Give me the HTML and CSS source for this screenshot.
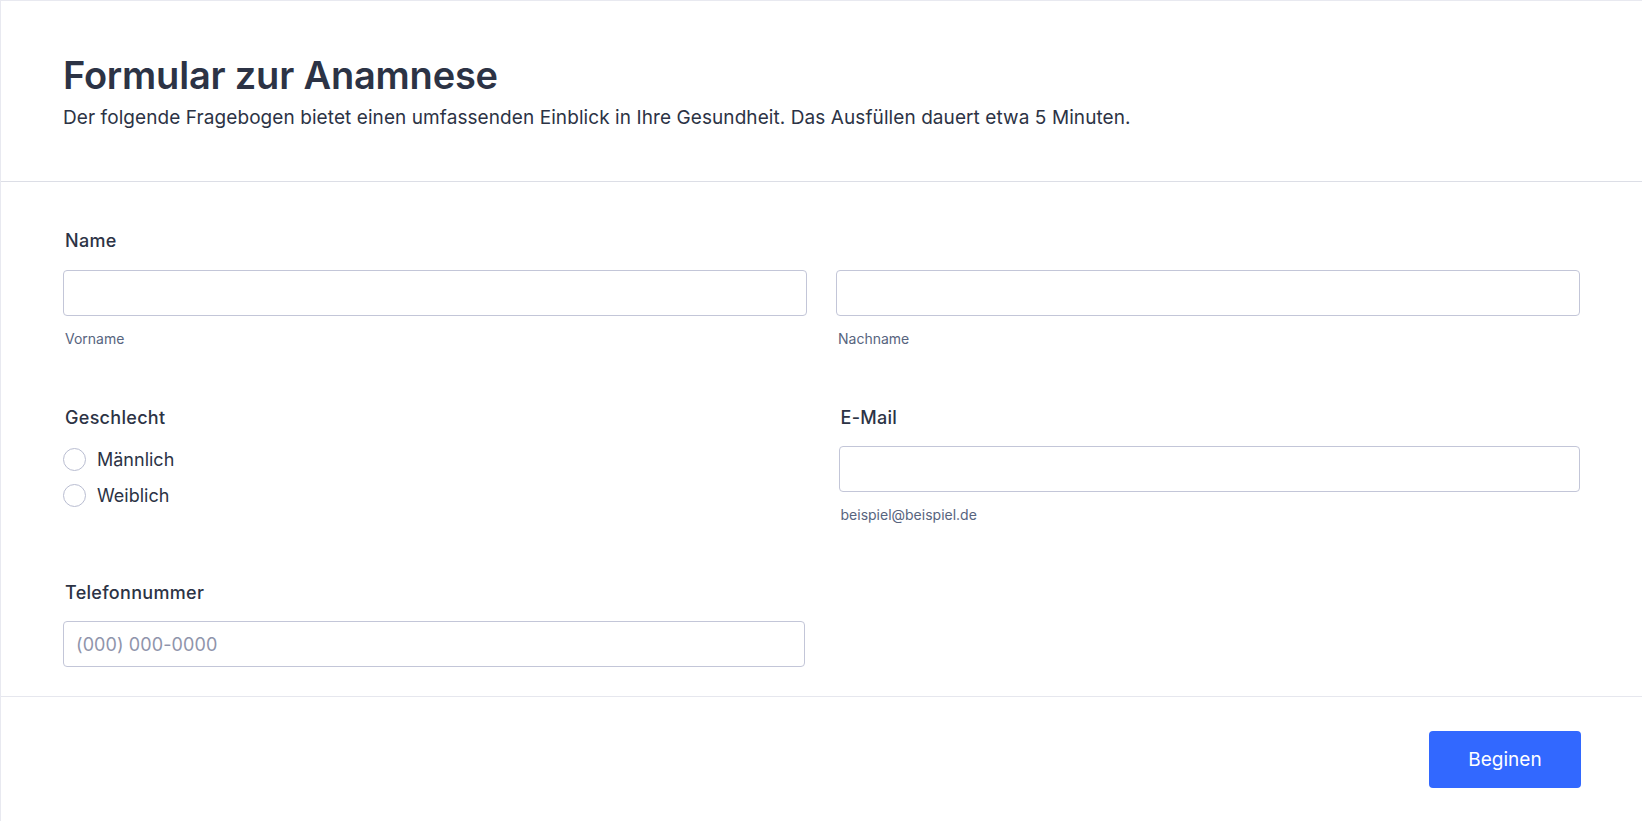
FILE: index.html
```html
<!DOCTYPE html>
<html lang="de">
<head>
<meta charset="utf-8">
<title>Formular zur Anamnese</title>
<link rel="stylesheet" href="styles.css">
</head>
<body>
<div class="form">
  <header class="form-header">
    <h1 class="title">Formular zur Anamnese</h1>
    <p class="subtitle">Der folgende Fragebogen bietet einen umfassenden Einblick in Ihre Gesundheit. Das Ausfüllen dauert etwa 5 Minuten.</p>
  </header>
  <main class="form-body">
    <div class="field field-full">
      <div class="label">Name</div>
      <div class="name-grid">
        <div class="sub">
          <input class="input" type="text">
          <div class="sublabel">Vorname</div>
        </div>
        <div class="sub">
          <input class="input" type="text">
          <div class="sublabel">Nachname</div>
        </div>
      </div>
    </div>
    <div class="field">
      <div class="label">Geschlecht</div>
      <div class="radios">
        <label class="radio"><span class="circle"></span><span>Männlich</span></label>
        <label class="radio"><span class="circle"></span><span>Weiblich</span></label>
      </div>
    </div>
    <div class="field">
      <div class="label">E-Mail</div>
      <input class="input" type="text">
      <div class="sublabel">beispiel@beispiel.de</div>
    </div>
    <div class="field">
      <div class="label">Telefonnummer</div>
      <input class="input" type="text" placeholder="(000) 000-0000">
    </div>
  </main>
  <footer class="form-footer">
    <button class="btn" type="button">Beginen</button>
  </footer>
</div>
</body>
</html>
```

FILE: styles.css
```css
* { box-sizing: border-box; }
html, body { margin: 0; padding: 0; background: #fff; }
body {
  font-family: Inter, "Noto Sans", sans-serif;
  color: #2c3345;
  overflow: hidden;
}
.form {
  border-top: 1px solid #e8e9f0;
  border-left: 1px solid #e8e9f0;
  min-height: 821px;
}
.form-header {
  padding: 51px 62px 50px 62px;
  border-bottom: 1px solid #dcdee6;
}
.title {
  margin: 0;
  font-size: 38px;
  line-height: 46px;
  font-weight: 600;
  letter-spacing: -0.2px;
  color: #2c3345;
}
.subtitle {
  margin: 6px 0 0 0;
  font-size: 19px;
  line-height: 27px;
  font-weight: 400;
  letter-spacing: 0.08px;
  color: #2c3345;
}
.form-body {
  display: grid;
  grid-template-columns: 1fr 1fr;
  column-gap: 34px;
  row-gap: 56px;
  padding: 47px 62px 29px 62px;
  border-bottom: 1px solid #e6e7ee;
}
.field-full {
  grid-column: 1 / -1;
  margin-bottom: 1px;
}
.label {
  font-size: 18px;
  line-height: 24px;
  font-weight: 500;
  letter-spacing: 0.3px;
  color: #2c3345;
  padding-left: 2px;
  margin-bottom: 16px;
}
.field-full .label { margin-bottom: 17px; }
.name-grid {
  display: grid;
  grid-template-columns: 1fr 1fr;
  column-gap: 29px;
}
.input {
  display: block;
  width: 100%;
  height: 46px;
  border: 1px solid #c3c6d8;
  border-radius: 4px;
  padding: 0 12px;
  font-family: Inter, "Noto Sans", sans-serif;
  font-size: 18px;
  letter-spacing: 0.1px;
  color: #2c3345;
  background: #fff;
  outline: none;
}
.input::placeholder { color: #8f94ab; }
.sublabel {
  font-size: 14px;
  line-height: 20px;
  color: #57647e;
  margin-top: 13px;
  padding-left: 2px;
}
.radios {
  display: flex;
  flex-direction: column;
  gap: 12px;
  padding-top: 1px;
}
.radio {
  display: flex;
  align-items: center;
  gap: 11px;
  height: 24px;
  font-size: 18px;
  color: #2c3345;
}
.circle {
  width: 23px;
  height: 23px;
  border: 1px solid #b9bdd1;
  border-radius: 50%;
  background: #fff;
  flex: none;
}
.form-footer {
  display: flex;
  justify-content: flex-end;
  padding: 34px 61px 33px 62px;
}
.btn {
  width: 152px;
  height: 57px;
  border: none;
  border-radius: 4px;
  background: #3268ff;
  color: #fff;
  font-family: Inter, "Noto Sans", sans-serif;
  font-size: 19px;
  font-weight: 400;
  cursor: pointer;
}
```
